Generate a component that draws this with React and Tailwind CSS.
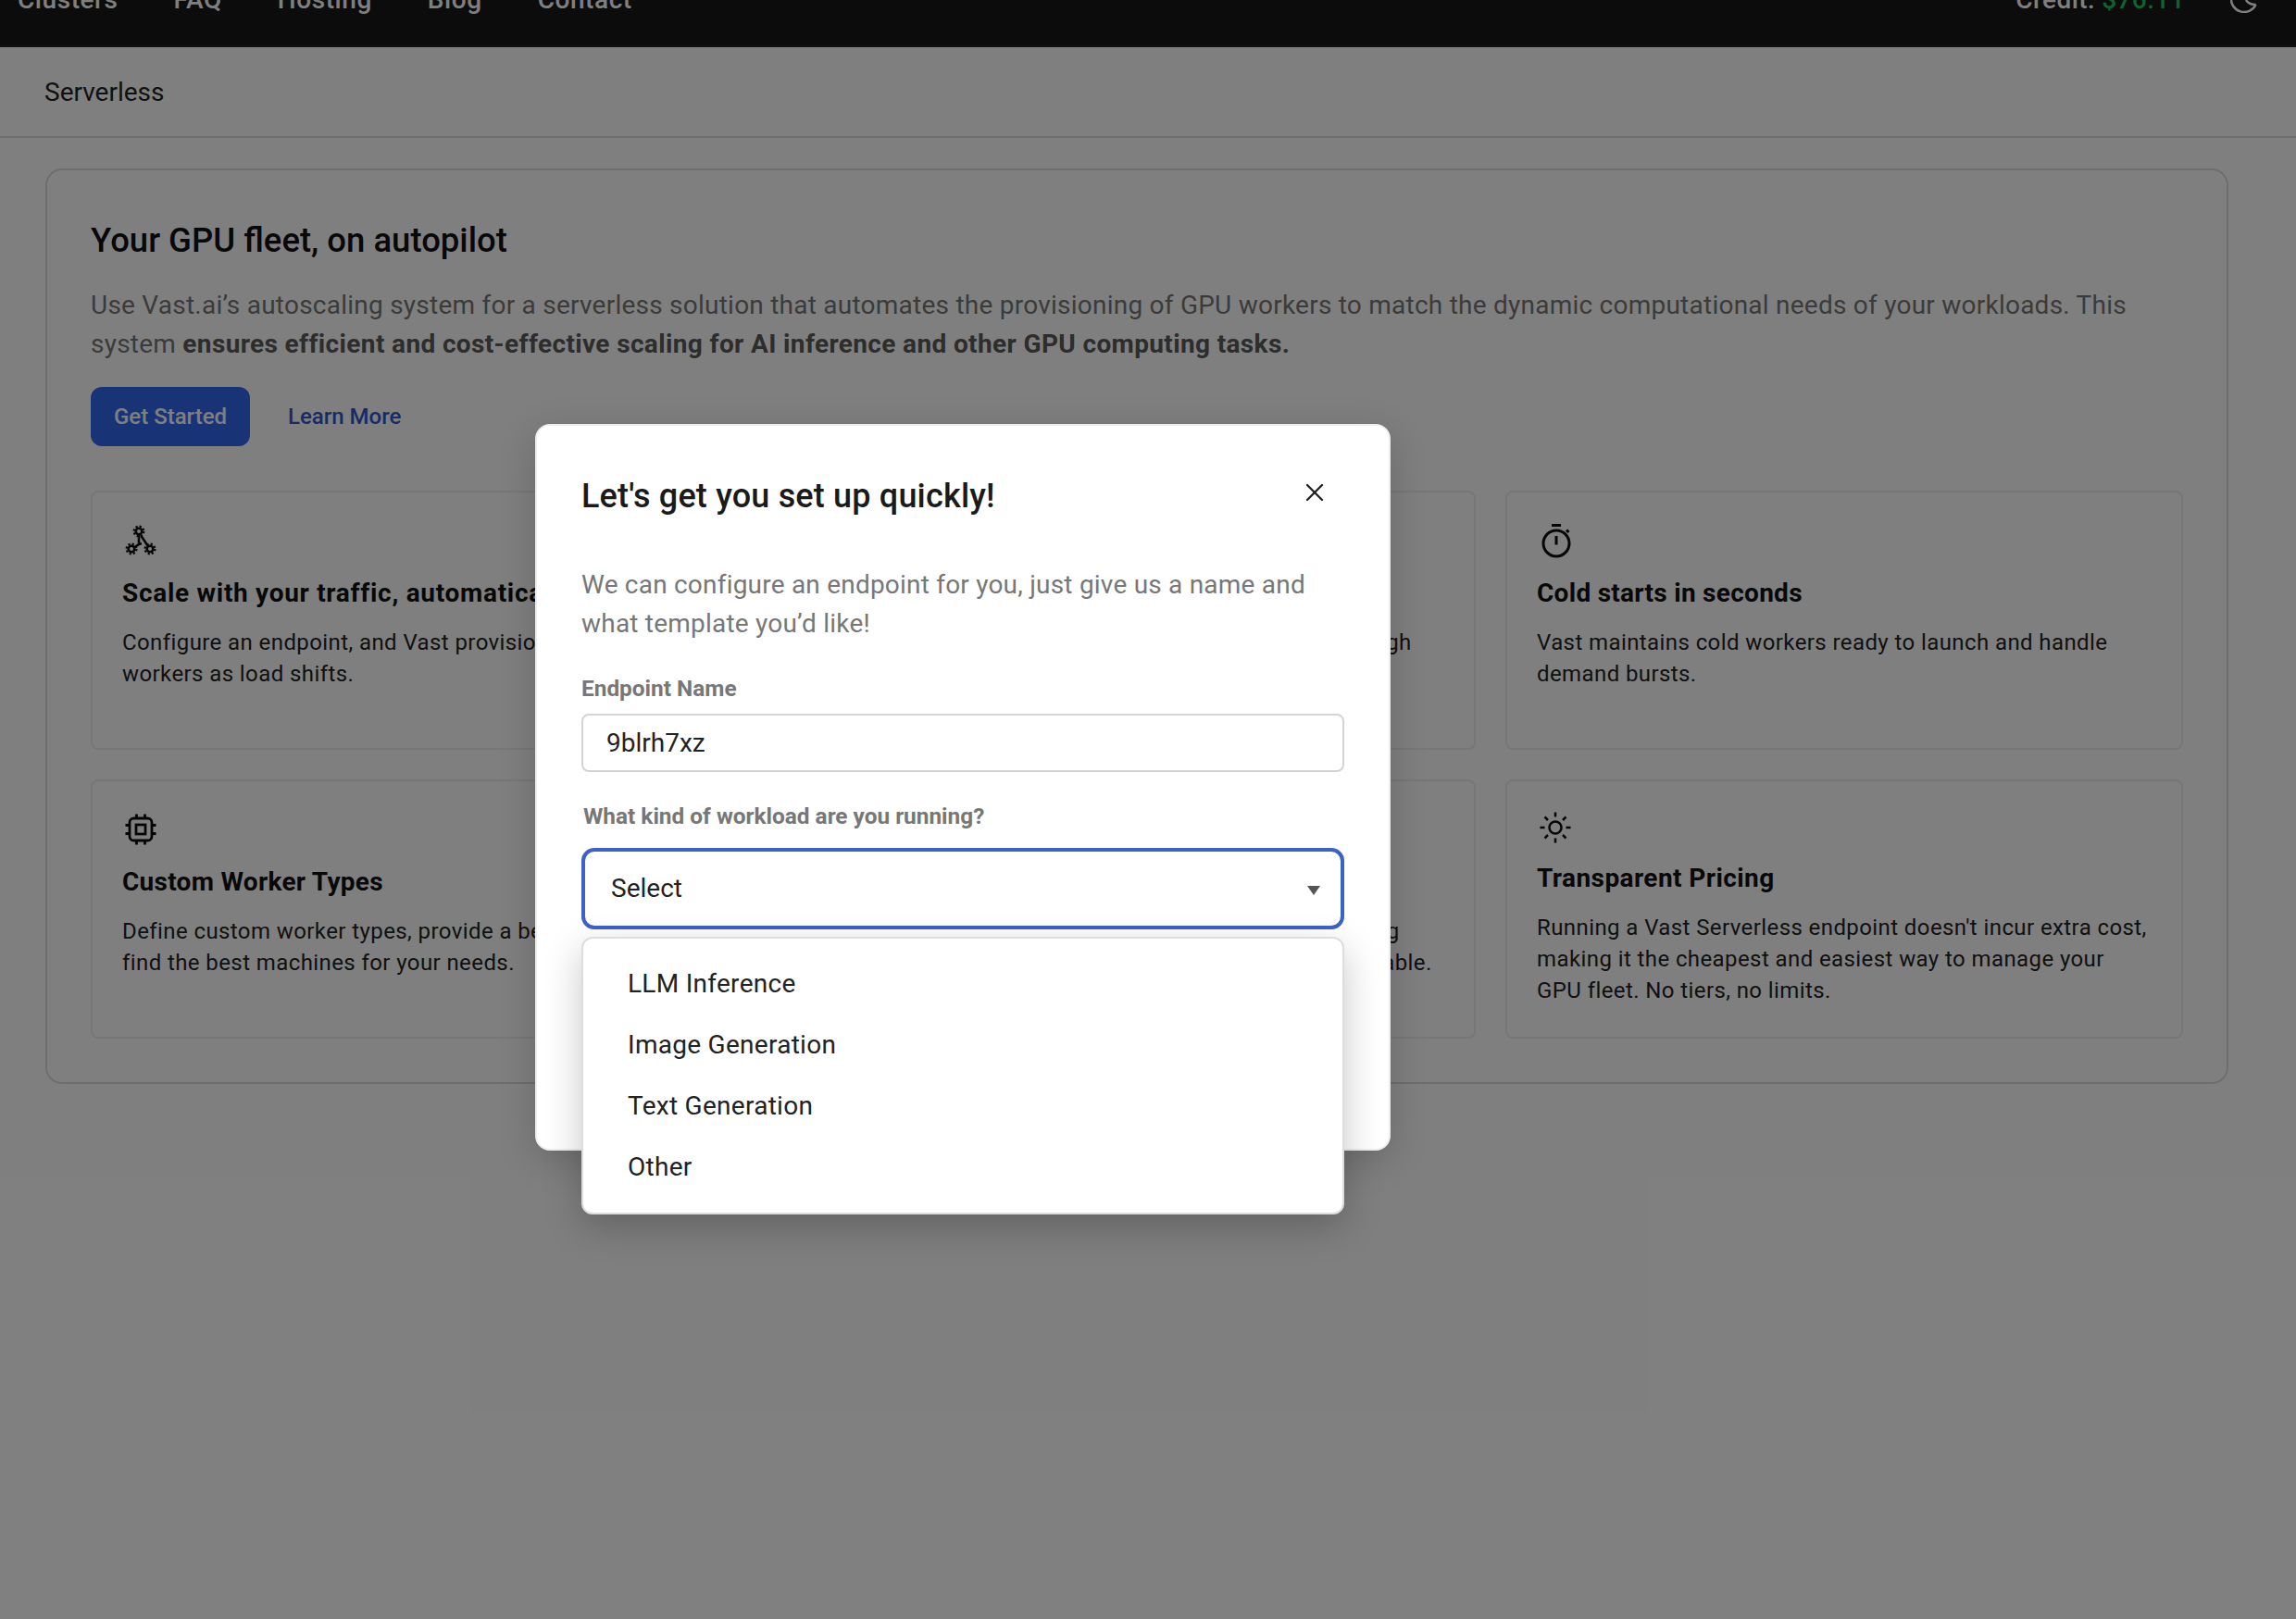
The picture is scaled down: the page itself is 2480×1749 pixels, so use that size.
import React from "react";
import { X, Route, Layers } from "lucide-react";

const Gear = ({ cx, cy }) => (
  <g>
    <circle cx={cx} cy={cy} r="3.3" strokeWidth="2.6" />
    <circle cx={cx} cy={cy} r="5.4" strokeWidth="2.2" strokeDasharray="2.2 2.04" />
  </g>
);

const GearsIcon = () => (
  <svg width="36" height="36" viewBox="0 0 36 36" fill="none" stroke="#0d0d0d">
    <path d="M16 12V22L11.5 25M18.5 13L25.5 23.5M16 22L19 21" strokeWidth="2.6" />
    <Gear cx={16} cy={8} />
    <Gear cx={8} cy={27} />
    <Gear cx={28} cy={27} />
  </svg>
);

const ChipIcon = () => (
  <svg width="36" height="36" viewBox="0 0 36 36" fill="none" stroke="#0d0d0d" strokeWidth="2.8">
    <rect x="6" y="6" width="24" height="24" rx="4.5" />
    <rect x="13" y="13" width="10" height="10" />
    <path d="M13.5 1.5V6M22.5 1.5V6M13.5 30V34.5M22.5 30V34.5M1.5 13.5H6M1.5 22.5H6M30 13.5H34.5M30 22.5H34.5" />
  </svg>
);

const StopwatchIcon = () => (
  <svg width="40" height="40" viewBox="0 0 40 40" fill="none" stroke="#0d0d0d" strokeWidth="3">
    <circle cx="19" cy="23" r="14" />
    <path d="M14 3.5H24M19 15V24.5M30 8.5L32.5 11" />
  </svg>
);

const SunIcon = () => (
  <svg width="36" height="36" viewBox="0 0 36 36" fill="none" stroke="#0d0d0d" strokeWidth="2.5">
    <circle cx="18" cy="18" r="6.5" />
    <path d="M18 1.5V6.5M18 29.5V34.5M1.5 18H6.5M29.5 18H34.5M6.5 6.5L10 10M26 26L29.5 29.5M6.5 29.5L10 26M26 10L29.5 6.5" />
  </svg>
);

const features = [
  {
    icon: <GearsIcon />,
    iconBox: "h-[40px]",
    titleTrack: "tracking-[0.025em]",
    title: "Scale with your traffic, automatically",
    lines: ["Configure an endpoint, and Vast provisions and releases", "workers as load shifts."],
  },
  {
    icon: <Route size={36} strokeWidth={2} color="#0d0d0d" />,
    iconBox: "h-[40px]",
    titleTrack: "tracking-[0.01em]",
    title: "Global routing",
    lines: ["Requests are routed to the fastest ready workers through", "one endpoint."],
  },
  {
    icon: <StopwatchIcon />,
    iconBox: "h-[40px]",
    titleTrack: "tracking-[0.01em]",
    title: "Cold starts in seconds",
    lines: ["Vast maintains cold workers ready to launch and handle", "demand bursts."],
  },
  {
    icon: <ChipIcon />,
    iconBox: "h-[40px]",
    titleTrack: "tracking-[0.01em]",
    title: "Custom Worker Types",
    lines: ["Define custom worker types, provide a benchmark, and we", "find the best machines for your needs."],
  },
  {
    icon: <Layers size={36} strokeWidth={2} color="#0d0d0d" />,
    iconBox: "h-[40px]",
    titleTrack: "tracking-[0.01em]",
    title: "Any framework",
    lines: ["Use your own container images with any server, keeping", "every deployment wholly portable, repeatable and scalable."],
  },
  {
    icon: <SunIcon />,
    iconBox: "h-[36px]",
    titleTrack: "tracking-[0.015em]",
    title: "Transparent Pricing",
    lines: [
      "Running a Vast Serverless endpoint doesn't incur extra cost,",
      "making it the cheapest and easiest way to manage your",
      "GPU fleet. No tiers, no limits.",
    ],
  },
];

const options = ["LLM Inference", "Image Generation", "Text Generation", "Other"];

const FeatureCard = ({ item }) => (
  <div className="h-[280px] rounded-lg border-2 border-[#eee] px-[32px] pt-[32px]">
    <div className={`flex items-center pl-[2px] ${item.iconBox}`}>{item.icon}</div>
    <h3 className={`mt-[19px] text-[28px] leading-[36px] font-bold text-[#111] ${item.titleTrack}`}>{item.title}</h3>
    <div className="mt-[18px] text-[24px] leading-[34px] tracking-[0.017em] text-[#222]">
      {item.lines.map((line) => (
        <p key={line} className="whitespace-nowrap">{line}</p>
      ))}
    </div>
  </div>
);

export default function App() {
  return (
    <div className="relative h-[1749px] w-[2480px] overflow-hidden bg-white font-['Roboto',sans-serif]">
      <nav className="flex h-[51px] items-start justify-between overflow-hidden border-b-2 border-[#222] bg-[#181818] pr-[41px] pl-[19px]">
        <div className="-mt-[22px] flex gap-[60px] text-[28px] leading-[44px] font-medium tracking-[0.02em] text-white">
          <span>Clusters</span>
          <span>FAQ</span>
          <span>Hosting</span>
          <span>Blog</span>
          <span>Contact</span>
        </div>
        <div className="-mt-[22px] flex items-start gap-[49px]">
          <span className="text-[28px] leading-[44px] font-medium tracking-[0.015em] text-white">
            Credit: <span className="text-[#22c55e]">$76.11</span>
          </span>
          <svg className="mt-[6px]" width="30" height="30" viewBox="0 0 30 30" fill="none" stroke="#fff" strokeWidth="2.5">
            <path d="M27.6 21A14 14 0 1 1 15 1" />
            <path d="M27.6 21Q20 21 17 16" />
          </svg>
        </div>
      </nav>

      <div className="flex h-[98px] items-center border-b-2 border-[#ddd] pt-[2px] pl-[48px] text-[28px] text-[#222]">
        Serverless
      </div>

      <main className="px-[49px] pt-[33px]">
        <section className="h-[989px] w-[2358px] rounded-[18px] border-2 border-[#ddd] px-[47px] pt-[51px]">
          <h1 className="text-[36.5px] leading-[50px] font-medium text-[#111]">Your GPU fleet, on autopilot</h1>
          <p className="mt-[24px] text-[28px] leading-[42px] tracking-[0.0085em] text-[#777]">
            Use Vast.ai’s autoscaling system for a serverless solution that automates the provisioning of GPU workers to match the dynamic computational needs of your workloads. This system{" "}
            <strong className="font-bold tracking-[0.013em] text-[#5a5a5a]">ensures efficient and cost-effective scaling for AI inference and other GPU computing tasks.</strong>
          </p>
          <div className="mt-[25px] flex items-center gap-[41px]">
            <button className="h-[64px] w-[172px] rounded-[12px] bg-[#3366ee] text-[24px] font-medium text-white">Get Started</button>
            <span className="text-[24px] font-medium text-[#3355cc]">Learn More</span>
          </div>
          <div className="mt-[48px] grid grid-cols-3 gap-x-[32px] gap-y-[32px]">
            {features.map((item) => (
              <FeatureCard key={item.title} item={item} />
            ))}
          </div>
        </section>
      </main>

      {/* backdrop */}
      <div className="absolute inset-0 bg-black/50" />

      <div className="absolute top-[458px] left-[578px] h-[785px] w-[924px] rounded-[16px] border-2 border-[#eee] bg-white px-[48px] pt-[48px] shadow-[0_10px_40px_rgba(0,0,0,0.18)]">
        <div className="flex items-start justify-between">
          <h2 className="text-[36px] leading-[56px] font-medium tracking-[0.005em] text-[#1a1a1a]">Let's get you set up quickly!</h2>
          <X className="mt-[8px] mr-[16px]" size={32} strokeWidth={1.75} color="#222" />
        </div>
        <p className="mt-[47px] text-[28px] leading-[42px] tracking-[0.0075em] text-[#777]">
          We can configure an endpoint for you, just give us a name and what template you’d like!
        </p>
        <label className="mt-[34px] block text-[24.4px] leading-[30px] font-bold text-[#777]">Endpoint Name</label>
        <div className="mt-[12px] flex h-[63px] w-[824px] items-center rounded-[8px] border-2 border-[#d4d4d4] pl-[25px] text-[28px] text-[#222]">
          9blrh7xz
        </div>
        <label className="mt-[33px] block pl-[2px] text-[24.4px] leading-[30px] font-bold text-[#777]">What kind of workload are you running?</label>
        <div className="relative mt-[19px] w-[824px]">
          <div className="flex h-[88px] items-center justify-between rounded-[14px] border-4 border-[#3b62c9] pr-[22px] pl-[28px] text-[28px] text-[#222]">
            <span>Select</span>
            <span className="mt-[4px] h-0 w-0 border-x-[7px] border-t-[10px] border-x-transparent border-t-[#555]" />
          </div>
          <ul className="absolute top-[96px] right-0 left-0 h-[300px] rounded-[12px] border-2 border-[#ddd] bg-white pt-[16px] pl-[48px] text-[28px] tracking-[0.01em] text-[#222] shadow-[0_14px_40px_rgba(0,0,0,0.22)]">
            {options.map((opt) => (
              <li key={opt} className="flex h-[66px] items-center">{opt}</li>
            ))}
          </ul>
        </div>
      </div>
    </div>
  );
}
